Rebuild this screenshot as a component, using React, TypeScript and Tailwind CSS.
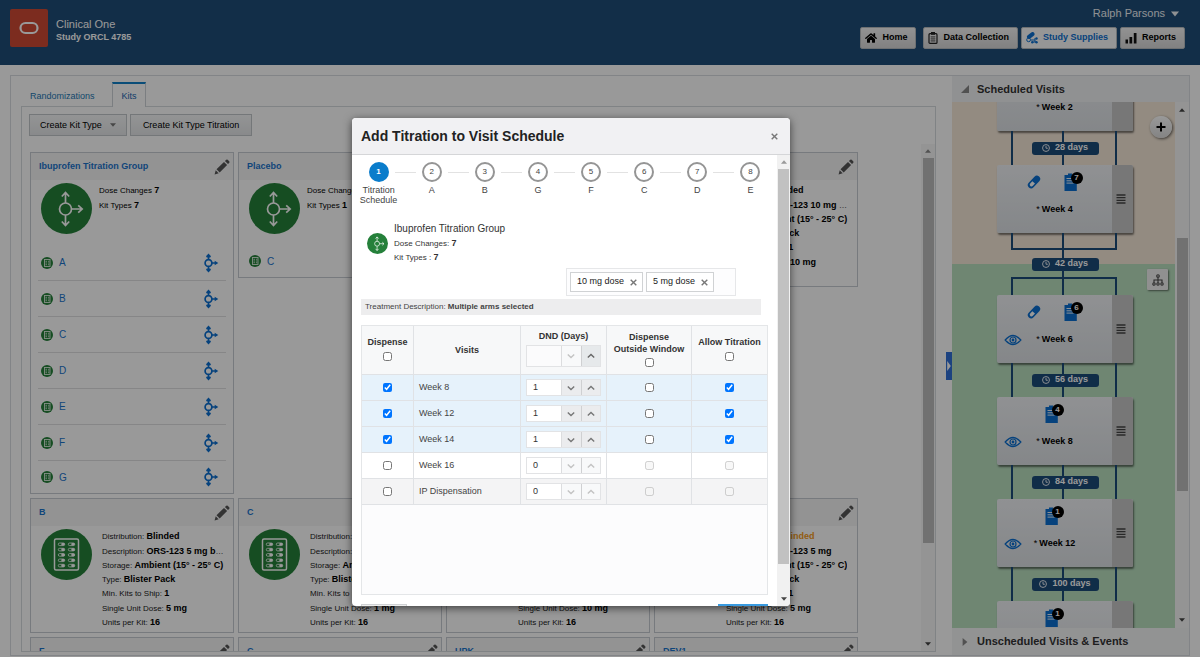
import React, { useState } from "react";
import { FaHome } from "react-icons/fa";

/* ---------- icons ---------- */

function TitrationBadge({ className }: { className: string }) {
  return (
    <svg viewBox="0 0 51 51" className={className} aria-hidden="true">
      <circle cx="25.5" cy="25.5" r="25.5" fill="#25803a" />
      <g fill="none" stroke="#fff" strokeWidth="1.7">
        <circle cx="24.500" cy="26" r="6" />
        <path d="M24.500 20V9.500M20.800 13.500l3.700-4 3.700 4M24.500 32V42.500M20.800 38.500l3.700 4 3.700-4M30.500 26H41M37.200 22.300l4 3.700-4 3.700" />
      </g>
    </svg>
  );
}

function BlisterBadge({ className }: { className: string }) {
  const rows = [14, 19.3, 24.6, 30, 35.3];
  return (
    <svg viewBox="0 0 51 51" className={className} aria-hidden="true">
      <circle cx="25.5" cy="25.5" r="25.5" fill="#25803a" />
      <rect x="13.500" y="10" width="24" height="31" rx="1.500" fill="none" stroke="#fff" strokeWidth="1.500" />
      {rows.map((y) => (
        <g key={y}>
          <rect x="17.300" y={y} width="6.400" height="2.600" rx="1.300" fill="none" stroke="#fff" strokeWidth="0.800" />
          <rect x="20.300" y={y} width="3.400" height="2.600" rx="1" fill="#fff" />
          <rect x="27.300" y={y} width="6.400" height="2.600" rx="1.300" fill="none" stroke="#fff" strokeWidth="0.800" />
          <rect x="30.300" y={y} width="3.400" height="2.600" rx="1" fill="#fff" />
        </g>
      ))}
    </svg>
  );
}

function PencilIcon() {
  return (
    <svg viewBox="0 0 16 16" className="size-4" aria-hidden="true">
      <path d="M0.600 15.400 1.700 11.300 4.700 14.300zM2.500 10.300 10 2.900 13.100 6 5.700 13.500zM10.900 2 12.300 0.700Q13 0.200 13.700 0.800L15.200 2.300Q15.800 3 15.300 3.700L14 5.100z" fill="#555" />
    </svg>
  );
}

function KitDot() {
  return (
    <svg viewBox="0 0 12 12" className="size-3" aria-hidden="true">
      <circle cx="6" cy="6" r="6" fill="#25803a" />
      <rect x="3.500" y="2.500" width="5.500" height="7" fill="none" stroke="#dfeee2" strokeWidth="0.900" />
      <path d="M4.500 4.300h1.500M4.500 6h1.500M4.500 7.700h1.500M7 4.300h1.300M7 6h1.300M7 7.700h1.300" stroke="#dfeee2" strokeWidth="0.800" />
    </svg>
  );
}

function BranchIcon() {
  return (
    <svg viewBox="0 0 16 20" className="h-5 w-4" aria-hidden="true">
      <circle cx="5.500" cy="10" r="3.400" fill="none" stroke="#0b6fd0" strokeWidth="1.700" />
      <path d="M5.500 6.500V3M5.500 13.500V17M9 10h4" stroke="#0b6fd0" strokeWidth="1.600" />
      <path d="M3 3.300 5.500.4 8 3.300 7.200 4.500H3.800zM3 16.700l2.500 2.900L8 16.700 7.200 15.500H3.800zM11.700 7.700 15.300 10l-3.600 2.300z" fill="#0b6fd0" />
    </svg>
  );
}

function ClipboardGrid() {
  return (
    <svg viewBox="0 0 10 12" className="h-3 w-2.5" aria-hidden="true">
      <rect x="1" y="1.700" width="8" height="9.700" rx="1" fill="none" stroke="#222" strokeWidth="1.200" />
      <path d="M3 0h4v2.800H3z" fill="#222" />
      <path d="M2.500 4.800h5M2.500 6.800h5M2.500 8.800h5M4 4v6M6 4v6" stroke="#444" strokeWidth="0.600" />
    </svg>
  );
}

function SuppliesIcon() {
  return (
    <svg viewBox="0 0 12 12" className="size-3" aria-hidden="true">
      <rect x="0.500" y="1.500" width="8.500" height="4" rx="2" transform="rotate(-38 4.700 3.500)" fill="#0b6fd0" />
      <circle cx="2.600" cy="7.800" r="1.900" fill="none" stroke="#0b6fd0" />
      <path d="M5 8h4M9 6v4M7 10h3" stroke="#0b6fd0" />
      <circle cx="10.500" cy="6.500" r="1.200" fill="#0b6fd0" />
      <circle cx="10.500" cy="10.300" r="1.200" fill="#0b6fd0" />
      <circle cx="6.300" cy="10.200" r="1.200" fill="#0b6fd0" />
    </svg>
  );
}

function BarsIcon() {
  return (
    <svg viewBox="0 0 12 12" className="size-3" aria-hidden="true">
      <path d="M0.500 7.500h2.500v4h-2.500zM4.500 5h2.700v6.500H4.500zM8.800 1h2.700v10.500H8.800z" fill="#111" />
    </svg>
  );
}

function CapsuleIcon() {
  return (
    <svg viewBox="0 0 16 16" className="size-4" aria-hidden="true">
      <g transform="rotate(-47 8 8)">
        <rect x="0.500" y="4.700" width="15" height="6.600" rx="3.300" fill="#0b6fd0" />
        <path d="M7.500 6.200H4.400a1.800 1.800 0 0 0 0 3.600H7.500z" fill="#fff" />
      </g>
    </svg>
  );
}

function FormIcon({ count }: { count: number }) {
  return (
    <span className="relative block h-[18px] w-3.5">
      <svg viewBox="0 0 14 18" className="h-[18px] w-3.5" aria-hidden="true">
        <path d="M0.500 2H4V0.500h4V2h4.800v16H0.500z" fill="#0b6fd0" />
        <path d="M2.500 5.500h7M2.500 7.800h7M2.500 10.100h7" stroke="#fff" strokeWidth="0.900" />
      </svg>
      <span className="absolute -top-px left-[7px] flex size-3 items-center justify-center rounded-full bg-black text-[8px] font-bold text-white">
        {count}
      </span>
    </span>
  );
}

function EyeIcon() {
  return (
    <svg viewBox="0 0 18 12" className="h-3 w-[18px]" aria-hidden="true">
      <path d="M1.200 6Q9-3 16.800 6 9 15 1.200 6z" fill="none" stroke="#0b6fd0" strokeWidth="1.300" />
      <circle cx="9" cy="6" r="3" fill="none" stroke="#0b6fd0" strokeWidth="1.200" />
      <circle cx="9" cy="6" r="1.400" fill="#0b6fd0" />
    </svg>
  );
}

function ClockIcon() {
  return (
    <svg viewBox="0 0 10 10" className="size-2" aria-hidden="true">
      <circle cx="5" cy="5" r="4.300" fill="none" stroke="#fff" strokeWidth="1.100" />
      <path d="M5 2.300V5.300h2.300" fill="none" stroke="#fff" strokeWidth="1.100" />
    </svg>
  );
}

function SitemapIcon() {
  return (
    <svg viewBox="0 0 14 14" className="size-3.5" aria-hidden="true">
      <g fill="none" stroke="#444" strokeWidth="1.100">
        <circle cx="7" cy="3" r="1.300" />
        <path d="M7 4.300v5.500M3 9.800V7h8v2.800" />
        <circle cx="3" cy="11" r="1.200" />
        <circle cx="7" cy="11" r="1.200" />
        <circle cx="11" cy="11" r="1.200" />
      </g>
    </svg>
  );
}

function Triangle({ dir, className }: { dir: "up" | "down" | "right" | "corner"; className: string }) {
  const d = {
    up: "M0 8 5 2l5 6z",
    down: "M0 2h10L5 8z",
    right: "M2 0l6 5-6 5z",
    corner: "M10 0v10H0z",
  }[dir];
  return (
    <svg viewBox="0 0 10 10" className={className} preserveAspectRatio="none" aria-hidden="true">
      <path d={d} fill="currentColor" />
    </svg>
  );
}

function Chevron({ up }: { up?: boolean }) {
  return (
    <svg viewBox="0 0 10 6" className="h-1.5 w-2" aria-hidden="true">
      <path d={up ? "M1 5l4-4 4 4" : "M1 1l4 4 4-4"} fill="none" stroke="currentColor" strokeWidth="1.700" />
    </svg>
  );
}

/* ---------- header ---------- */

const navBase = "flex h-[22px] items-center gap-[5px] rounded-[2px] border border-[#b8bcc0] pr-2 pl-1 text-[9px] font-bold";

function Header() {
  return (
    <header className="flex h-[65px] shrink-0 justify-between bg-[#1f4e79] pr-[15px] pl-2.5">
      <div className="flex items-start gap-2 pt-[9px]">
        <div className="flex size-[38px] items-center justify-center rounded-[2px] bg-[#cf4a35]">
          <svg viewBox="0 0 20 14" className="h-3.5 w-5" aria-hidden="true">
            <rect x="1.500" y="2" width="17" height="10" rx="5" fill="none" stroke="#fff" strokeWidth="2.200" />
          </svg>
        </div>
        <div className="pt-2 text-white">
          <p className="text-[11px] leading-[14px]">Clinical One</p>
          <p className="text-[9px] leading-[13px] font-bold">Study ORCL 4785</p>
        </div>
      </div>
      <div className="flex flex-col items-end">
        <button className="mt-1.5 mr-1.5 flex h-[15px] items-center gap-1.5 text-[11px] text-[#eef2f6]">
          Ralph Parsons
          <Triangle dir="down" className="size-2" />
        </button>
        <nav className="mt-1.5 flex gap-[3px]">
          <a href="#home" className={navBase + " mr-1 bg-linear-to-b from-[#f4f4f4] to-[#d8d8d8] text-black"}>
            <FaHome className="size-3" />
            Home
          </a>
          <a href="#data" className={navBase + " bg-linear-to-b from-[#f4f4f4] to-[#d8d8d8] text-black"}>
            <ClipboardGrid />
            Data Collection
          </a>
          <a href="#supplies" className={navBase + " bg-[#fafafa] text-[#0b6fd0]"}>
            <SuppliesIcon />
            Study Supplies
          </a>
          <a href="#reports" className={navBase + " bg-linear-to-b from-[#f4f4f4] to-[#d8d8d8] text-black"}>
            <BarsIcon />
            Reports
          </a>
        </nav>
      </div>
    </header>
  );
}

/* ---------- kit cards ---------- */

function Card({ title, children }: { title: string; children?: React.ReactNode }) {
  return (
    <article className="border border-[#c6cbd2] bg-white">
      <header className="flex h-[27px] items-center justify-between bg-[#f5f5f6] pr-[3px] pl-2">
        <h3 className="text-[9px] font-bold text-[#1b74cc]">{title}</h3>
        <button aria-label={"Edit " + title}>
          <PencilIcon />
        </button>
      </header>
      {children}
    </article>
  );
}

function TitrationCard({ title, types, kits, arrows }: { title: string; types: number; kits: string[]; arrows?: boolean }) {
  return (
    <Card title={title}>
      <div className="flex h-[65px] gap-[7px] pt-[3px] pl-2.5">
        <TitrationBadge className="size-[51px]" />
        <div className="text-[8px] leading-[14px] text-black">
          <p>
            Dose Changes <b className="text-[9px]">7</b>
          </p>
          <p>
            Kit Types <b className="text-[9px]">{types}</b>
          </p>
        </div>
      </div>
      <ul className="px-[7px]">
        {kits.map((k) => (
          <li
            key={k}
            className="flex h-9 items-center gap-1.5 border-b border-[#dfe0e2] pr-[7px] pl-[3px] last:h-8 last:border-b-0"
          >
            <KitDot />
            <a href={"#" + k} className="grow text-[10px] text-[#1b74cc]">
              {k}
            </a>
            {arrows && <BranchIcon />}
          </li>
        ))}
      </ul>
    </Card>
  );
}

type Kit = { title: string; dist: string; orange?: boolean; desc: string; dose: string };

function KitCard({ title, dist, orange, desc, dose }: Kit) {
  const rows: [string, string][] = [
    ["Distribution", dist],
    ["Description", desc],
    ["Storage", "Ambient (15° - 25° C)"],
    ["Type", "Blister Pack"],
    ["Min. Kits to Ship", "1"],
    ["Single Unit Dose", dose],
    ["Units per Kit", "16"],
  ];
  return (
    <Card title={title}>
      <div className="flex gap-2.5 pt-[3px] pr-2 pb-[3px] pl-2.5">
        <BlisterBadge className="size-[51px] shrink-0" />
        <dl className="grid h-[100px] min-w-0 grid-rows-7 text-[8px]">
          {rows.map(([k, v]) => (
            <div key={k} className="truncate leading-[14px]">
              <dt className="inline text-[#222]">{k}: </dt>
              <dd className={"inline text-[9px] font-bold " + (orange && k === "Distribution" ? "text-[#f59a1b]" : "text-black")}>{v}</dd>
            </div>
          ))}
        </dl>
      </div>
    </Card>
  );
}

function KitsPanel() {
  return (
    <section className="flex min-w-0 grow flex-col pt-1.5 pr-4 pb-[3px] pl-2.5">
      <div className="relative z-10 flex h-[26px] text-[9px]" role="tablist">
        <button role="tab" aria-selected="false" className="w-[91px] pt-1 pl-[9px] text-left text-[#1d78b5]">
          Randomizations
        </button>
        <button role="tab" aria-selected="true" className="w-[34px] border-x border-t-2 border-x-[#cdd2d8] border-t-[#1180c9] bg-white pt-0.5 text-[#1a68b0]">
          Kits
        </button>
      </div>
      <div className="-mt-px flex min-h-0 grow flex-col border border-[#d6dade] pt-[7px] pl-[7px]">
        <div className="flex gap-[3px] text-[9px] text-black">
          <button className="flex h-[22px] items-center gap-2 border border-[#c2c6ca] bg-linear-to-b from-[#f6f7f8] to-[#e4e6e8] px-2.5">
            Create Kit Type
            <Triangle dir="down" className="size-1.5 text-[#777]" />
          </button>
          <button className="h-[22px] border border-[#c2c6ca] bg-linear-to-b from-[#f6f7f8] to-[#e4e6e8] px-3">
            Create Kit Type Titration
          </button>
        </div>
        <div className="mt-2 flex min-h-0 grow justify-between">
          <div className="grid grid-cols-[repeat(4,204px)] content-start items-start gap-1 overflow-hidden pt-2 pl-px">
            <TitrationCard title="Ibuprofen Titration Group" types={7} kits={["A", "B", "C", "D", "E", "F", "G"]} arrows />
            <TitrationCard title="Placebo" types={1} kits={["C"]} />
            <KitCard title="A" dist="Blinded" desc="ORS-123 1 mg bottle" dose="1 mg" />
            <KitCard title="A1" dist="Blinded" desc="ORS-123 10 mg bottle" dose="10 mg" />
            <KitCard title="B" dist="Blinded" desc="ORS-123 5 mg bottle" dose="5 mg" />
            <KitCard title="C" dist="Blinded" desc="ORS-123 1 mg bottle" dose="1 mg" />
            <KitCard title="D" dist="Blinded" desc="ORS-123 10 mg" dose="10 mg" />
            <KitCard title="D1" dist="Unblinded" orange desc="ORS-123 5 mg" dose="5 mg" />
            <Card title="F" />
            <Card title="C" />
            <Card title="UPK" />
            <Card title="DEV1" />
          </div>
          <div className="flex w-3.5 flex-col items-center bg-[#f7f7f7]">
            <Triangle dir="up" className="my-1 size-1.5 shrink-0 text-[#888]" />
            <div className="w-[11px] flex-[385] bg-[#bdbdbd]" />
            <div className="flex-[94]" />
            <Triangle dir="down" className="my-1 size-1.5 shrink-0 text-[#444]" />
          </div>
        </div>
      </div>
    </section>
  );
}

/* ---------- visit schedule ---------- */

function Visit({ name, forms, pill, eye, menu = true }: { name: string; forms?: number; pill?: boolean; eye?: boolean; menu?: boolean }) {
  return (
    <div className="flex h-[68px] w-[136px] shrink-0 overflow-hidden rounded-[2px] bg-linear-to-b from-[#f0f2f5] to-[#dde1e5] shadow-[1px_2px_2px_rgba(0,0,0,0.5)]">
      <div className="flex w-[115px] flex-col">
        <div className="flex h-[34px] items-center justify-center gap-[22px] pr-1.5">
          {pill && <CapsuleIcon />}
          {forms && <FormIcon count={forms} />}
        </div>
        <div className="mt-px grid h-5 grid-cols-[1fr_auto_1fr] items-center">
          <span className="pl-[7px]">{eye && <EyeIcon />}</span>
          <span className="flex gap-0.5 text-[9px] font-bold whitespace-nowrap text-black">
            <span className="font-normal">*</span>
            {name}
          </span>
        </div>
      </div>
      <button aria-label={name + " menu"} className="flex grow items-center justify-center bg-[#c6c6c6] pr-1">
        {menu && (
          <svg viewBox="0 0 10 10" className="size-2.5" aria-hidden="true">
            <path d="M0.500 1h9M0.500 3.700h9M0.500 6.300h9M0.500 9h9" stroke="#444" strokeWidth="1.300" />
          </svg>
        )}
      </button>
    </div>
  );
}

function Days({ days, branch }: { days: number; branch?: boolean }) {
  return (
    <div className="grid shrink-0 place-items-center">
      <svg
        viewBox={branch ? "0 0 136 62" : "0 0 136 34"}
        className={"col-start-1 row-start-1 w-[136px] " + (branch ? "h-[62px]" : "h-[34px]")}
        aria-hidden="true"
      >
        <path
          d={branch ? "M15 0V16H119V0M66 0V62M15 62V45H119V62" : "M15 0V34M66 0V34M119 0V34"}
          fill="none"
          stroke="#1c4c79"
          strokeWidth="2"
        />
      </svg>
      <span className="z-10 col-start-1 row-start-1 flex h-[13px] w-[67px] items-center justify-center gap-[5px] rounded-[3px] bg-[#1c4c79] text-[9px] font-bold text-white">
        <ClockIcon />
        {days} days
      </span>
    </div>
  );
}

function VisitsPanel() {
  return (
    <aside className="relative flex w-[237px] shrink-0 flex-col bg-[#fafafb]">
      <button
        aria-label="Collapse panel"
        className="absolute top-[276px] -left-1.5 flex h-7 w-1.5 items-center justify-center bg-[#2f6fd6] text-white"
      >
        <Triangle dir="right" className="h-2.5 w-1.5" />
      </button>
      <h2 className="flex h-[26px] shrink-0 items-center gap-2 bg-[#f1f2f4] pl-[9px] text-[11px] font-bold text-[#333]">
        <Triangle dir="corner" className="size-2 text-[#888]" />
        Scheduled Visits
      </h2>
      <div className="flex min-h-0 grow">
        <div className="relative flex min-w-0 grow flex-col overflow-hidden bg-[linear-gradient(#f5e8d8_162px,#b9dfbf_162px)] pl-[45px]">
          <div className="-mt-[39px] flex w-[136px] flex-col">
            <Visit name="Week 2" menu={false} />
            <Days days={28} />
            <Visit name="Week 4" forms={7} pill />
            <Days days={42} branch />
            <Visit name="Week 6" forms={6} pill eye />
            <Days days={56} />
            <Visit name="Week 8" forms={4} eye />
            <Days days={84} />
            <Visit name="Week 12" forms={1} eye />
            <Days days={100} />
            <Visit name="Week 14" forms={1} eye menu={false} />
          </div>
          <button
            aria-label="Add visit"
            className="absolute top-3.5 right-[3px] flex size-[22px] items-center justify-center rounded-full bg-linear-to-b from-white to-[#dcdcdc] shadow-[1px_1px_3px_rgba(0,0,0,0.6)]"
          >
            <svg viewBox="0 0 10 10" className="size-2.5" aria-hidden="true">
              <path d="M5 0.500v9M0.500 5h9" stroke="#000" strokeWidth="2" />
            </svg>
          </button>
          <button
            aria-label="Branches"
            className="absolute top-[167px] right-[7px] flex size-[21px] items-center justify-center rounded-[1px] bg-[#f0f0f0] shadow-[1px_1px_2px_rgba(0,0,0,0.5)]"
          >
            <SitemapIcon />
          </button>
        </div>
        <div className="flex w-3.5 flex-col items-center bg-[#f7f7f7]">
          <Triangle dir="up" className="my-[5px] size-1.5 shrink-0 text-[#444]" />
          <div className="flex-[120]" />
          <div className="w-[11px] flex-[254] bg-[#bdbdbd]" />
          <div className="flex-[121]" />
          <Triangle dir="down" className="my-[5px] size-1.5 shrink-0 text-[#444]" />
        </div>
      </div>
      <h2 className="flex h-[27px] shrink-0 items-center gap-2 bg-[#f4f5f6] pl-[9px] text-[11px] font-bold text-[#333]">
        <Triangle dir="right" className="size-2 text-[#888]" />
        Unscheduled Visits &amp; Events
      </h2>
    </aside>
  );
}

/* ---------- dialog ---------- */

const steps = ["Titration Schedule", "A", "B", "G", "F", "C", "D", "E"];

function Stepper() {
  return (
    <ol className="-mx-[9px] flex h-[43px] text-[9px] leading-[10px] text-[#444]">
      {steps.map((s, i) => (
        <li key={s} className="flex flex-1 flex-col items-center gap-[3px]">
          <div className="flex w-full items-center">
            <span className={"mr-1.5 h-px grow " + (i === 0 ? "bg-transparent" : "bg-[#e2e2e2]")} />
            <span
              className={
                "flex size-5 items-center justify-center rounded-full text-[8px] " +
                (i === 0 ? "bg-[#0a7ccb] font-bold text-white" : "border-2 border-[#959595] text-[#444]")
              }
            >
              {i + 1}
            </span>
            <span className={"ml-1.5 h-px grow " + (i === 7 ? "bg-transparent" : "bg-[#e2e2e2]")} />
          </div>
          <span className="w-10 text-center">{s}</span>
        </li>
      ))}
    </ol>
  );
}

function Spinner({ label, value, tall, disabled }: { label: string; value: string; tall?: boolean; disabled?: boolean }) {
  const h = tall ? "h-[22px]" : "h-[17px]";
  return (
    <div className={"mx-auto flex w-[75px] border border-[#e2e3e5] bg-white " + h}>
      <input
        aria-label={label}
        defaultValue={value}
        className={"w-[34px] px-1.5 text-[9px] font-normal text-[#333] " + (tall ? "bg-[#fbfbfc]" : "bg-white")}
      />
      <button
        aria-label={label + " down"}
        className={
          "flex flex-1 items-center justify-center border-l border-[#dcdddf] " +
          (disabled || tall ? "bg-[#f8f9fa] text-[#c3c3c3]" : "bg-[#ebecee] text-[#777]")
        }
      >
        <Chevron />
      </button>
      <button
        aria-label={label + " up"}
        className={
          "flex flex-1 items-center justify-center border-l border-[#cfd0d2] " +
          (disabled ? "bg-[#f8f9fa] text-[#c3c3c3]" : tall ? "bg-[#e6e9eb] text-[#666]" : "bg-[#ebecee] text-[#777]")
        }
      >
        <Chevron up />
      </button>
    </div>
  );
}

function Check({ label, on, disabled }: { label: string; on?: boolean; disabled?: boolean }) {
  return <input type="checkbox" aria-label={label} defaultChecked={on} disabled={disabled} className="mx-auto block size-[9px] accent-[#0075ff]" />;
}

const visits = [
  { name: "Week 8", days: "1", on: true },
  { name: "Week 12", days: "1", on: true },
  { name: "Week 14", days: "1", on: true },
  { name: "Week 16", days: "0", on: false },
  { name: "IP Dispensation", days: "0", on: false },
];

const cell = "border-r border-b border-[#e0e2e5] p-0 last:border-r-0";
const headCell = "border-r border-b border-[#e0e2e5] p-0 pb-[3px] last:border-r-0";

function VisitTable() {
  return (
    <div className="mt-2.5 h-[270px] shrink-0 border border-[#e4e6e8] bg-[#fcfcfd]">
      <table className="w-full table-fixed border-separate border-spacing-0 text-[9px] text-[#444]">
        <colgroup>
          <col className="w-[52px]" />
          <col className="w-[107px]" />
          <col className="w-[86px]" />
          <col className="w-[85px]" />
          <col />
        </colgroup>
        <thead>
          <tr className="h-[49px] bg-[#f7f8f9] leading-3 text-[#333]">
            <th className={headCell}>
              Dispense
              <div className="pt-1">
                <Check label="Dispense all" />
              </div>
            </th>
            <th className={cell}>Visits</th>
            <th className={headCell}>
              DND (Days)
              <div className="pt-[3px]">
                <Spinner label="DND for all" value="" tall />
              </div>
            </th>
            <th className={headCell}>
              Dispense
              <br />
              Outside Window
              <div className="pt-[3px]">
                <Check label="Dispense outside window for all" />
              </div>
            </th>
            <th className={headCell}>
              Allow Titration
              <div className="pt-1">
                <Check label="Allow titration for all" />
              </div>
            </th>
          </tr>
        </thead>
        <tbody>
          {visits.map((v, i) => (
            <tr key={v.name} className={"h-[26px] " + (v.on ? "bg-[#e6f2fb]" : i === 4 ? "bg-[#f4f4f5]" : "bg-white")}>
              <td className={cell}>
                <Check label={"Dispense " + v.name} on={v.on} />
              </td>
              <td className={cell}>
                <span className="pl-[5px]">{v.name}</span>
              </td>
              <td className={cell}>
                <Spinner label={"DND " + v.name} value={v.days} disabled={!v.on} />
              </td>
              <td className={cell}>
                <Check label={"Outside window " + v.name} disabled={!v.on} />
              </td>
              <td className={cell}>
                <Check label={"Allow titration " + v.name} on={v.on} disabled={!v.on} />
              </td>
            </tr>
          ))}
        </tbody>
      </table>
    </div>
  );
}

function Cross({ className }: { className: string }) {
  return (
    <svg viewBox="0 0 10 10" className={className} aria-hidden="true">
      <path d="M1 1l8 8M9 1 1 9" stroke="currentColor" strokeWidth="2" />
    </svg>
  );
}

function TitrationDialog() {
  const [doses, setDoses] = useState(["10 mg dose", "5 mg dose"]);
  return (
    <div
      role="dialog"
      aria-label="Add Titration to Visit Schedule"
      className="absolute top-[118px] left-[352px] flex h-[488px] w-[438px] flex-col overflow-hidden rounded-[4px] bg-white shadow-[0_2px_8px_rgba(0,0,0,0.6)]"
    >
      <header className="flex h-[37px] shrink-0 items-center justify-between border-b border-[#d5d6d8] bg-[#f1f1f3] pr-3 pl-[9px]">
        <h1 className="text-[14px] font-bold text-[#222]">Add Titration to Visit Schedule</h1>
        <button aria-label="Close">
          <Cross className="size-[7px] text-[#777]" />
        </button>
      </header>
      <div className="flex min-h-0 grow">
        <div className="flex min-w-0 grow flex-col overflow-hidden px-[9px] pt-[7px]">
          <Stepper />
          <div className="mt-[17px] flex items-center gap-1.5 pl-1.5 text-[8px] leading-[14px] text-[#333]">
            <TitrationBadge className="size-[21px]" />
            <div>
              <p className="h-3.5 text-[10px] text-[#333]">Ibuprofen Titration Group</p>
              <p className="h-3.5">
                Dose Changes: <b className="text-[9px]">7</b>
              </p>
              <p className="h-3.5">
                Kit Types : <b className="text-[9px]">7</b>
              </p>
            </div>
          </div>
          <div className="mt-1 mr-8 flex h-7 w-[170px] shrink-0 gap-[3px] self-end border border-[#e6e7e9] bg-[#fdfdfe] p-[3px]">
            {doses.map((d) => (
              <span key={d} className="flex h-5 items-center gap-1.5 border border-[#d0d2d4] bg-white pr-[5px] pl-1.5 text-[9px] whitespace-nowrap text-[#222]">
                {d}
                <button aria-label={"Remove " + d} onClick={() => setDoses(doses.filter((x) => x !== d))}>
                  <Cross className="size-[7px] text-[#777]" />
                </button>
              </span>
            ))}
          </div>
          <p className="mt-[3px] mr-[7px] h-4 shrink-0 bg-[#ededee] pl-1 text-[8px] leading-[15px] text-[#444]">
            Treatment Description: <b>Multiple arms selected</b>
          </p>
          <VisitTable />
          <div className="mt-[9px] flex shrink-0 justify-between text-[9px]">
            <button className="h-6 w-[46px] border border-[#d0d2d4] bg-[#eee]">Cancel</button>
            <button className="h-6 w-[50px] bg-[#3a9be0] text-white">Next</button>
          </div>
        </div>
        <div className="flex w-[13px] shrink-0 flex-col items-center bg-[#f1f1f1]">
          <Triangle dir="up" className="my-1 size-1.5 shrink-0 text-[#999]" />
          <div className="w-[11px] flex-[395] bg-[#c1c1c1]" />
          <div className="flex-[28]" />
          <Triangle dir="down" className="my-1 size-1.5 shrink-0 text-[#444]" />
        </div>
      </div>
    </div>
  );
}

export default function App() {
  return (
    <div className="relative flex h-screen flex-col overflow-hidden bg-white font-['Liberation_Sans',Arial,sans-serif]">
      <Header />
      <main className="flex min-h-0 grow px-2.5 pt-2.5 pb-px">
        <div className="flex min-w-0 grow border border-[#d9dde2]">
          <KitsPanel />
          <VisitsPanel />
        </div>
      </main>
      <div className="absolute inset-0 z-20 bg-black/40" />
      <div className="absolute inset-0 z-30">
        <TitrationDialog />
      </div>
    </div>
  );
}
